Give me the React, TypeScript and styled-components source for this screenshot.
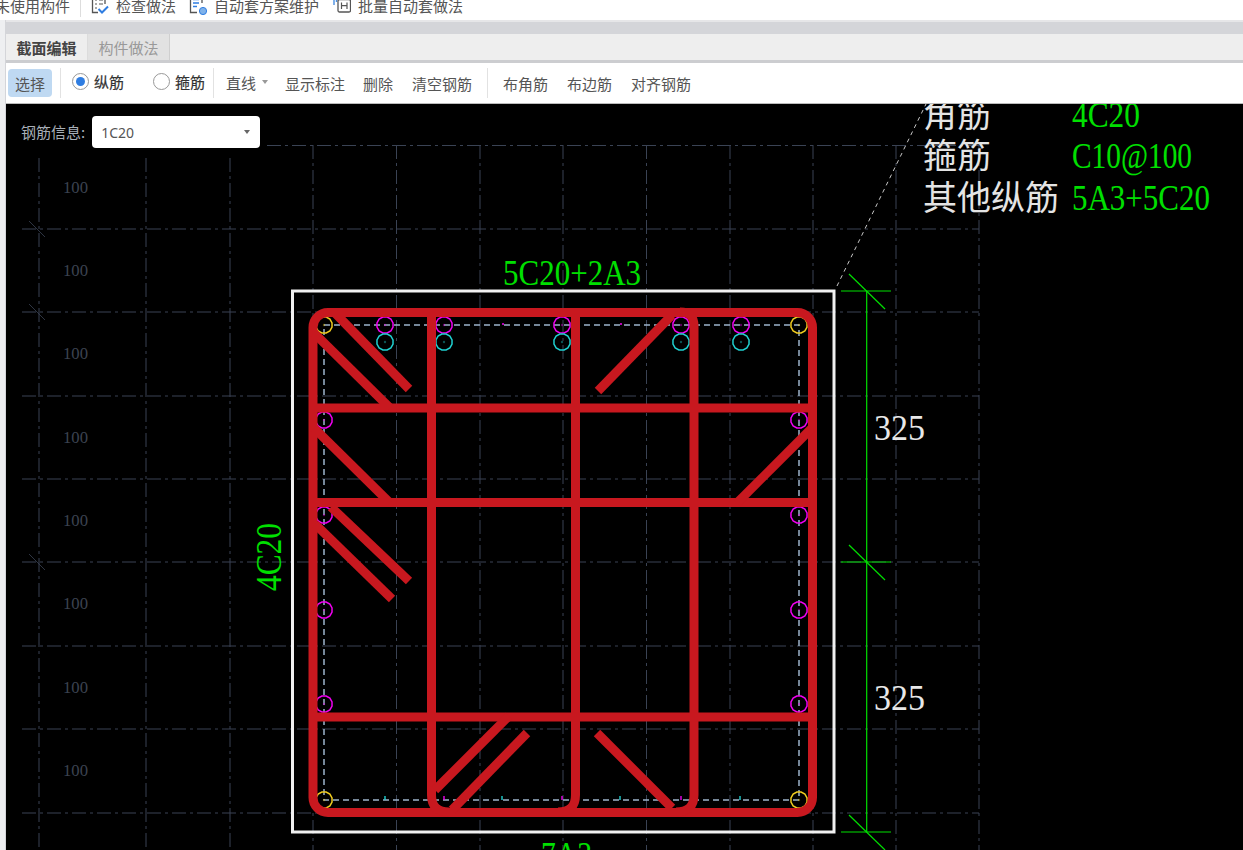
import React from "react";
import styled, { createGlobalStyle } from "styled-components";

const GlobalStyle = createGlobalStyle`
  html, body {
    margin: 0;
    padding: 0;
    height: 100%;
    overflow: hidden;
    background: #fff;
    font-family: "Noto Sans CJK SC", "Liberation Sans", sans-serif;
  }
`;

const Page = styled.div`
  width: 1243px;
  height: 850px;
  display: flex;
  flex-direction: column;
  overflow: hidden;
`;

const TopBar = styled.div`
  height: 20px;
  flex: none;
  overflow: hidden;
  background: #fff;
`;

const TopRow = styled.div`
  height: 24px;
  margin: -7px 0 0 -5px;
  display: flex;
  align-items: center;
  font-size: 15px;
  color: #555;
  white-space: nowrap;
`;

const TopSep = styled.span`
  width: 1px;
  height: 24px;
  background: #ddd;
  margin: 0 10px;
`;

const TopItem = styled.span<{ $gap: number }>`
  display: flex;
  align-items: center;
  gap: 7px;
  margin-right: ${(p) => p.$gap}px;
`;

const Body = styled.div`
  flex: 1;
  min-height: 0;
  display: flex;
`;

const LeftEdge = styled.div`
  width: 5px;
  flex: none;
  background: #eeeff1;
  border-right: 1px solid #d4d5d9;
`;

const Panel = styled.div`
  flex: 1;
  min-width: 0;
  display: flex;
  flex-direction: column;
  border-top: 2px solid #e6e6e8;
`;

const GreyStrip = styled.div`
  height: 12px;
  flex: none;
  background: #d4d5d9;
`;

const Tabs = styled.div`
  height: 26px;
  flex: none;
  display: flex;
  background: #eeeeee;
`;

const Tab = styled.div<{ $active?: boolean }>`
  width: 81px;
  display: flex;
  align-items: center;
  justify-content: center;
  font-size: 15px;
  font-weight: ${(p) => (p.$active ? 700 : 400)};
  color: ${(p) => (p.$active ? "#444" : "#999")};
  background: ${(p) => (p.$active ? "#eeeeee" : "#e2e2e2")};
  border-right: ${(p) => (p.$active ? "1px solid #dcdcdc" : "1px solid #cfcfcf")};
`;

const Toolbar = styled.div`
  height: 40px;
  flex: none;
  display: flex;
  align-items: center;
  padding-left: 2px;
  background: #fff;
  border-top: 3px solid #cccdd0;
  border-bottom: 1px solid #bbb;
  font-size: 15px;
  color: #555;
  white-space: nowrap;
`;

const SelectBtn = styled.div`
  width: 44px;
  height: 28px;
  border-radius: 4px;
  background: #bfd9f2;
  display: flex;
  align-items: center;
  justify-content: center;
`;

const ToolSep = styled.span<{ $left: number; $right: number }>`
  width: 1px;
  height: 30px;
  background: #e2e2e2;
  margin: 0 ${(p) => p.$right}px 0 ${(p) => p.$left}px;
`;

const Radio = styled.span<{ $checked?: boolean; $left: number }>`
  width: 17px;
  height: 17px;
  box-sizing: border-box;
  border-radius: 50%;
  border: 1px solid #999;
  margin: -4px 5px 0 ${(p) => p.$left}px;
  display: flex;
  align-items: center;
  justify-content: center;
  &::after {
    content: "";
    width: 9px;
    height: 9px;
    border-radius: 50%;
    background: ${(p) => (p.$checked ? "#2f7de1" : "transparent")};
  }
`;

const RadioText = styled.span`
  color: #333;
  margin-top: -4px;
  -webkit-text-stroke: 0.2px #333;
`;

const LineSelect = styled.span`
  width: 48px;
  display: flex;
  align-items: center;
  gap: 6px;
  padding-left: 3px;
  box-sizing: border-box;
  margin-top: -2px;
`;

const Caret = styled.span<{ $color: string }>`
  width: 0;
  height: 0;
  border-left: 3px solid transparent;
  border-right: 3px solid transparent;
  border-top: 4px solid ${(p) => p.$color};
`;

const Tool = styled.span<{ $left: number }>`
  margin-left: ${(p) => p.$left}px;
  margin-top: 1px;
`;

const Canvas = styled.div`
  flex: 1;
  min-height: 0;
  position: relative;
  background: #000;
  overflow: hidden;
`;

const Drawing = styled.svg`
  position: absolute;
  inset: 0;
  display: block;
`;

const InfoRow = styled.div`
  position: absolute;
  left: 15px;
  top: 12px;
  display: flex;
  align-items: center;
  gap: 7px;
  font-size: 15px;
  color: #a8afb8;
`;

const InfoLabel = styled.span`
  margin-top: -2px;
`;

const InfoSelect = styled.div`
  width: 168px;
  height: 32px;
  box-sizing: border-box;
  padding: 0 10px 0 9px;
  display: flex;
  align-items: center;
  justify-content: space-between;
  background: #fff;
  border-radius: 4px;
  font-family: "Noto Sans", "Liberation Sans", sans-serif;
  font-size: 14px;
  color: #555;
`;

const CadText = styled.text<{ $tone: "green" | "white" | "grid" }>`
  font-family: "Liberation Serif", serif;
  font-size: ${(p) => (p.$tone === "grid" ? 17 : 36)}px;
  fill: ${(p) =>
    p.$tone === "green" ? "#00e000" : p.$tone === "white" ? "#e8e8e8" : "#3c4350"};
`;

const CadCjk = styled.text`
  font-family: "Noto Sans CJK SC", sans-serif;
  font-size: 34px;
  fill: #e4e4e4;
`;

const GRID = "#3a4354";
const RED = "#c8181f";
const MAGENTA = "#f000f0";
const CYAN = "#20d0d0";
const YELLOW = "#f0cc20";
const GREEN = "#00e000";

const gridY = [229, 312, 396, 479, 562, 646, 729, 813];
const gridX = [39, 146, 230, 313, 396.5, 480, 563, 646.5, 730, 813, 896, 979];
const labelY = [193, 276, 359, 443, 526, 609, 693, 776];

const topBars = [385, 444, 562, 681, 741];
const sideBars = [420, 515, 610, 704];
const bottomTicks = [385, 444, 502, 562, 620, 681, 740];

const redPaths = [
  "M431.5 312 V795 Q431.5 812 449 812",
  "M575.5 312 V795 Q575.5 812 558 812",
  "M694 326 Q694 312 680 312 M694 326 V795 Q694 812 676 812",
  "M313 408 H812",
  "M313 502.5 H812",
  "M313 717 H812",
  "M335 313 L409 389",
  "M314 333 L390 408",
  "M314 428 L390 503",
  "M331 507 L409 581",
  "M315 524 L392 599",
  "M598 391 L672 315",
  "M737 503 L812 428",
  "M435 790 L509 716",
  "M527 733 L452 810",
  "M597 733 L672 808",
];

function Ring({ x, y, color }: { x: number; y: number; color: string }) {
  // the CAD view draws circles as polygons
  const points = Array.from({ length: 12 }, (_, i) => {
    const a = (i / 12) * Math.PI * 2 + Math.PI / 12;
    return `${x + 8.3 * Math.cos(a)},${y + 8.3 * Math.sin(a)}`;
  }).join(" ");
  return (
    <g>
      <polygon points={points} fill="none" stroke={color} strokeWidth={1.5} />
      <circle cx={x} cy={y} r={1.2} fill={color} opacity={0.4} />
    </g>
  );
}

function DimTick({ y }: { y: number }) {
  return (
    <g stroke={GREEN} strokeWidth={1.2}>
      <line x1={841} y1={y} x2={891} y2={y} />
      <line x1={849} y1={y - 17} x2={885} y2={y + 18} />
    </g>
  );
}

function CheckIcon() {
  return (
    <svg width="18" height="20" viewBox="0 -3 18 20" fill="none">
      <path d="M1.5 -4 V14.5 H7 M14 -4 V6" stroke="#555" strokeWidth="1.3" />
      <path d="M4 2 H6 M8 2 H12 M4 6 H6 M8 6 H12 M4 10 H6" stroke="#555" strokeWidth="1.2" />
      <path d="M7.5 11 L11 14.5 L17 8.5" stroke="#2f7de1" strokeWidth="2" />
    </svg>
  );
}

function SchemeIcon() {
  return (
    <svg width="18" height="20" viewBox="0 -3 18 20" fill="none">
      <path d="M1.5 -4 V14.5 H8 M13 -4 V5" stroke="#555" strokeWidth="1.3" />
      <path d="M4 1.5 H10 M4 5 H10 M4 8.5 H8" stroke="#2f7de1" strokeWidth="1.4" />
      <circle cx="14" cy="13" r="3.6" fill="#7fb2ea" stroke="#2f7de1" />
    </svg>
  );
}

function BatchIcon() {
  return (
    <svg width="18" height="20" viewBox="0 -3 18 20" fill="none">
      <path d="M1 -4 V7 M3.5 -4 V4" stroke="#4a90e2" strokeWidth="1.4" />
      <rect x="5" y="1.5" width="12.5" height="12.5" rx="1.5" stroke="#555" strokeWidth="1.3" />
      <path d="M8.5 4.5 V11 M14 4.5 V11 M8.5 7.7 H14" stroke="#555" strokeWidth="1.2" />
    </svg>
  );
}

export default function App() {
  return (
    <Page>
      <GlobalStyle />
      <TopBar>
        <TopRow>
          <span>未使用构件</span>
          <TopSep />
          <TopItem $gap={13}>
            <CheckIcon />
            检查做法
          </TopItem>
          <TopItem $gap={14}>
            <SchemeIcon />
            自动套方案维护
          </TopItem>
          <TopItem $gap={0}>
            <BatchIcon />
            批量自动套做法
          </TopItem>
        </TopRow>
      </TopBar>
      <Body>
        <LeftEdge />
        <Panel>
          <GreyStrip />
          <Tabs>
            <Tab $active>截面编辑</Tab>
            <Tab>构件做法</Tab>
          </Tabs>
          <Toolbar>
            <SelectBtn>选择</SelectBtn>
            <ToolSep $left={8} $right={0} />
            <Radio $checked $left={11} />
            <RadioText>纵筋</RadioText>
            <Radio $left={29} />
            <RadioText>箍筋</RadioText>
            <ToolSep $left={8} $right={9} />
            <LineSelect>
              直线
              <Caret $color="#999" />
            </LineSelect>
            <Tool $left={14}>显示标注</Tool>
            <Tool $left={18}>删除</Tool>
            <Tool $left={19}>清空钢筋</Tool>
            <ToolSep $left={15} $right={0} />
            <Tool $left={15}>布角筋</Tool>
            <Tool $left={19}>布边筋</Tool>
            <Tool $left={19}>对齐钢筋</Tool>
          </Toolbar>
          <Canvas>
            <Drawing width="1237" height="746" viewBox="6 104 1237 746">
              <g stroke={GRID} strokeWidth={1} strokeDasharray="14 4 3 4" fill="none">
                <line x1={267} y1={145.5} x2={979} y2={145.5} />
                {gridY.map((y) => (
                  <line key={y} x1={22} y1={y} x2={979} y2={y} />
                ))}
                {gridX.map((x) => (
                  <line key={x} x1={x} y1={x < 300 ? 158 : 145} x2={x} y2={850} />
                ))}
              </g>
              <g stroke={GRID} strokeWidth={0.8}>
                {[229, 312, 562].map((y) => (
                  <line key={y} x1={29} y1={y - 8} x2={45} y2={y + 8} />
                ))}
              </g>
              {labelY.map((y) => (
                <CadText key={y} $tone="grid" x={63} y={y} textLength={25} lengthAdjust="spacingAndGlyphs">
                  100
                </CadText>
              ))}

              <line
                x1={837}
                y1={286}
                x2={926}
                y2={104}
                stroke="#c8c8c8"
                strokeWidth={1}
                strokeDasharray="4 4"
              />

              <rect x={292.5} y={291} width={541.5} height={541} fill="none" stroke="#f0f0f0" strokeWidth={3} />

              <rect
                x={324}
                y={325}
                width={475}
                height={475}
                fill="none"
                stroke="#9db4cc"
                strokeWidth={1.5}
                strokeDasharray="6 4"
              />
              {topBars.map((x) => (
                <g key={x}>
                  <Ring x={x} y={325} color={MAGENTA} />
                  <Ring x={x} y={342} color={CYAN} />
                </g>
              ))}
              {sideBars.map((y) => (
                <g key={y}>
                  <Ring x={324} y={y} color={MAGENTA} />
                  <Ring x={799} y={y} color={MAGENTA} />
                </g>
              ))}
              {[
                [324, 325],
                [799, 325],
                [324, 800],
                [799, 800],
              ].map(([x, y]) => (
                <Ring key={`${x}-${y}`} x={x} y={y} color={YELLOW} />
              ))}
              {bottomTicks.map((x, i) => (
                <line
                  key={x}
                  x1={x}
                  y1={796}
                  x2={x}
                  y2={800}
                  stroke={i % 2 === 0 ? CYAN : MAGENTA}
                  strokeWidth={1.4}
                />
              ))}
              <circle cx={503} cy={324} r={1} fill={MAGENTA} />
              <circle cx={621} cy={324} r={1} fill={MAGENTA} />

              <g fill="none" stroke={RED} strokeWidth={9}>
                <rect x={313} y={312.5} width={499.5} height={500} rx={15} />
                {redPaths.map((d) => (
                  <path key={d} d={d} />
                ))}
              </g>

              <line x1={866.7} y1={291} x2={866.7} y2={832} stroke={GREEN} strokeWidth={1.2} />
              <DimTick y={291} />
              <DimTick y={562} />
              <DimTick y={832} />

              <CadText $tone="green" x={503} y={285} textLength={138} lengthAdjust="spacingAndGlyphs">
                5C20+2A3
              </CadText>
              <CadText
                $tone="green"
                transform="translate(281 591) rotate(-90)"
                textLength={68}
                lengthAdjust="spacingAndGlyphs"
              >
                4C20
              </CadText>
              <CadText $tone="green" x={541} y={867} textLength={51} lengthAdjust="spacingAndGlyphs">
                7A3
              </CadText>
              <CadText $tone="white" x={874} y={440} textLength={51} lengthAdjust="spacingAndGlyphs">
                325
              </CadText>
              <CadText $tone="white" x={874} y={710} textLength={51} lengthAdjust="spacingAndGlyphs">
                325
              </CadText>

              <CadCjk x={923} y={127}>角筋</CadCjk>
              <CadCjk x={923} y={168}>箍筋</CadCjk>
              <CadCjk x={923} y={210}>其他纵筋</CadCjk>
              <CadText $tone="green" x={1072} y={127} textLength={68} lengthAdjust="spacingAndGlyphs">
                4C20
              </CadText>
              <CadText $tone="green" x={1072} y={168} textLength={120} lengthAdjust="spacingAndGlyphs">
                C10@100
              </CadText>
              <CadText $tone="green" x={1072} y={210} textLength={138} lengthAdjust="spacingAndGlyphs">
                5A3+5C20
              </CadText>
            </Drawing>
            <InfoRow>
              <InfoLabel>钢筋信息:</InfoLabel>
              <InfoSelect>
                1C20
                <Caret $color="#666" />
              </InfoSelect>
            </InfoRow>
          </Canvas>
        </Panel>
      </Body>
    </Page>
  );
}
